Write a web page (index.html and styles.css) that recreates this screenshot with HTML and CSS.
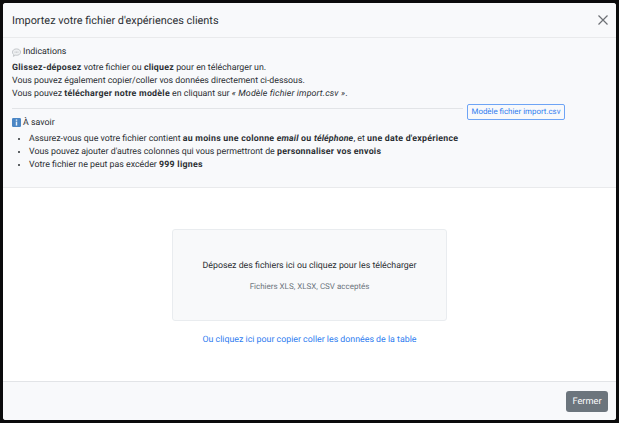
FILE: index.html
```html
<!DOCTYPE html>
<html lang="fr">
<head>
    <meta charset="UTF-8">
    <meta name="viewport" content="width=device-width, initial-scale=1.0">
    <title>Import</title>
    <link rel="stylesheet" href="styles.css">
</head>
<body>

<div class="modal">
    <header class="modal-header">
        <h1>Importez votre fichier d'expériences clients</h1>
        <button class="close-btn" aria-label="Fermer">
            <svg width="10" height="10" viewBox="0 0 10 10"><path d="M0.5 0.5 L9.5 9.5 M9.5 0.5 L0.5 9.5"></path></svg>
        </button>
    </header>

    <section class="infos">
        <h2 class="infos-title">
            <svg class="emoji" width="9" height="9" viewBox="0 0 10 10"><path class="bubble" d="M5 1 C7.6 1 9.5 2.5 9.5 4.6 C9.5 6.7 7.6 8.1 5 8.1 C4.5 8.1 4 8 3.6 8 L1.6 9.3 L2 7.4 C1 6.7 0.5 5.7 0.5 4.6 C0.5 2.5 2.4 1 5 1 Z"></path><path class="dots" d="M3 4.6 H7"></path></svg>
            Indications
        </h2>
        <p><b>Glissez-déposez</b> votre fichier ou <b>cliquez</b> pour en télécharger un.</p>
        <p>Vous pouvez également copier/coller vos données directement ci-dessous.</p>
        <p>Vous pouvez <b>télécharger notre modèle</b> en cliquant sur <i>« Modèle fichier import.csv »</i>.</p>

        <div class="rule-row">
            <hr>
            <a class="model-btn" href="#">Modèle fichier import.csv</a>
        </div>

        <h2 class="infos-title savoir">
            <svg class="emoji info-icon" width="9" height="9" viewBox="0 0 10 10"><rect width="10" height="10" rx="1.5" fill="#4a86c5"></rect><rect x="4.2" y="1.6" width="1.6" height="1.5" fill="#e8f0f8"></rect><rect x="4.2" y="4" width="1.6" height="4.4" fill="#e8f0f8"></rect></svg>
            À savoir
        </h2>
        <ul>
            <li>Assurez-vous que votre fichier contient <b>au moins une colonne <i>email</i> ou <i>téléphone</i></b>, et <b>une date d'expérience</b></li>
            <li>Vous pouvez ajouter d'autres colonnes qui vous permettront de <b>personnaliser vos envois</b></li>
            <li>Votre fichier ne peut pas excéder <b>999 lignes</b></li>
        </ul>
    </section>

    <main class="upload">
        <div class="dropzone">
            <p class="drop-text">Déposez des fichiers ici ou cliquez pour les télécharger</p>
            <p class="drop-hint">Fichiers XLS, XLSX, CSV acceptés</p>
        </div>
        <a class="paste-link" href="#">Ou cliquez ici pour copier coller les données de la table</a>
    </main>

    <footer class="modal-footer">
        <button class="close-footer">Fermer</button>
    </footer>
</div>

</body>
</html>
```

FILE: styles.css
```css
html, body {
    height: 100%;
}

body {
    margin: 0;
    padding: 3px;
    box-sizing: border-box;
    background-color: #0b0b0c;
    font-family: Roboto, "Noto Sans", sans-serif;
    font-size: 8.8px;
    line-height: 13px;
    color: #2b2f33;
    text-rendering: geometricPrecision;
}

b {
    letter-spacing: 0.25px;
}

i {
    letter-spacing: 0.15px;
}

.modal {
    height: 100%;
    width: 613px;
    display: flex;
    flex-direction: column;
    background: #fff;
    border-radius: 3px;
    overflow: hidden;
}

.modal-header {
    height: 34px;
    flex: none;
    display: flex;
    align-items: center;
    justify-content: space-between;
    padding: 0 8px 0 9px;
    background: #f8f9fb;
    border-bottom: 1px solid #e9eaec;
}

.modal-header h1 {
    margin: 0;
    font-size: 10.9px;
    font-weight: 400;
}

.close-btn {
    background: none;
    border: none;
    padding: 0;
    display: flex;
}

.close-btn path {
    stroke: #6c7075;
    stroke-width: 1.2;
    fill: none;
}

.infos {
    flex: none;
    height: 150px;
    box-sizing: border-box;
    padding: 8px 9px 0;
    background: #f8f9fb;
    border-bottom: 1px solid #e9eaec;
}

.infos p {
    margin: 0;
}

.infos-title {
    margin: 0 0 3px;
    font-size: 8.85px;
    font-weight: 400;
    display: flex;
    align-items: center;
    gap: 2px;
}

.savoir {
    margin-top: -3px;
}

.emoji {
    flex: none;
}

.info-icon {
    margin-top: -2px;
}

.bubble {
    fill: #eef0f2;
    stroke: #a9adb2;
    stroke-width: 0.7;
}

.dots {
    stroke: #8f9398;
    stroke-width: 0.8;
    stroke-dasharray: 0.8 0.8;
}

.rule-row {
    display: flex;
    align-items: center;
    gap: 4px;
    margin-top: 3px;
}

.rule-row hr {
    flex: 1;
    margin: 0 0 8px;
    border: none;
    border-top: 1px solid #e2e4e7;
}

.model-btn {
    flex: none;
    width: 98px;
    height: 16px;
    box-sizing: border-box;
    margin-right: 42px;
    border: 1px solid #6ea4f5;
    border-radius: 2px;
    font-size: 7.9px;
    line-height: 14px;
    text-align: center;
    color: #2f7df0;
    text-decoration: none;
}

ul {
    margin: 3px 0 0;
    padding-left: 17px;
}

.upload {
    flex: 1;
    display: flex;
    flex-direction: column;
    align-items: center;
    padding-top: 41px;
}

.dropzone {
    width: 275px;
    height: 92px;
    box-sizing: border-box;
    display: flex;
    flex-direction: column;
    align-items: center;
    justify-content: center;
    padding-top: 2px;
    background: #f8f9fa;
    border: 1px solid #e9ecef;
    border-radius: 3px;
}

.dropzone p {
    margin: 0;
}

.drop-hint {
    margin-top: 7px !important;
    font-size: 8px;
    color: #6c757d;
}

.paste-link {
    margin-top: 13px;
    color: #2f7df0;
    text-decoration: none;
}

.modal-footer {
    flex: none;
    height: 39px;
    box-sizing: border-box;
    display: flex;
    align-items: center;
    justify-content: flex-end;
    padding: 0 8px;
    background: #f8f9fb;
    border-top: 1px solid #e2e4e7;
}

.close-footer {
    width: 42px;
    height: 21px;
    padding: 0;
    font-family: inherit;
    font-size: 9.2px;
    text-rendering: inherit;
    color: #fff;
    background-color: #6c757d;
    border: none;
    border-radius: 3px;
}
```
